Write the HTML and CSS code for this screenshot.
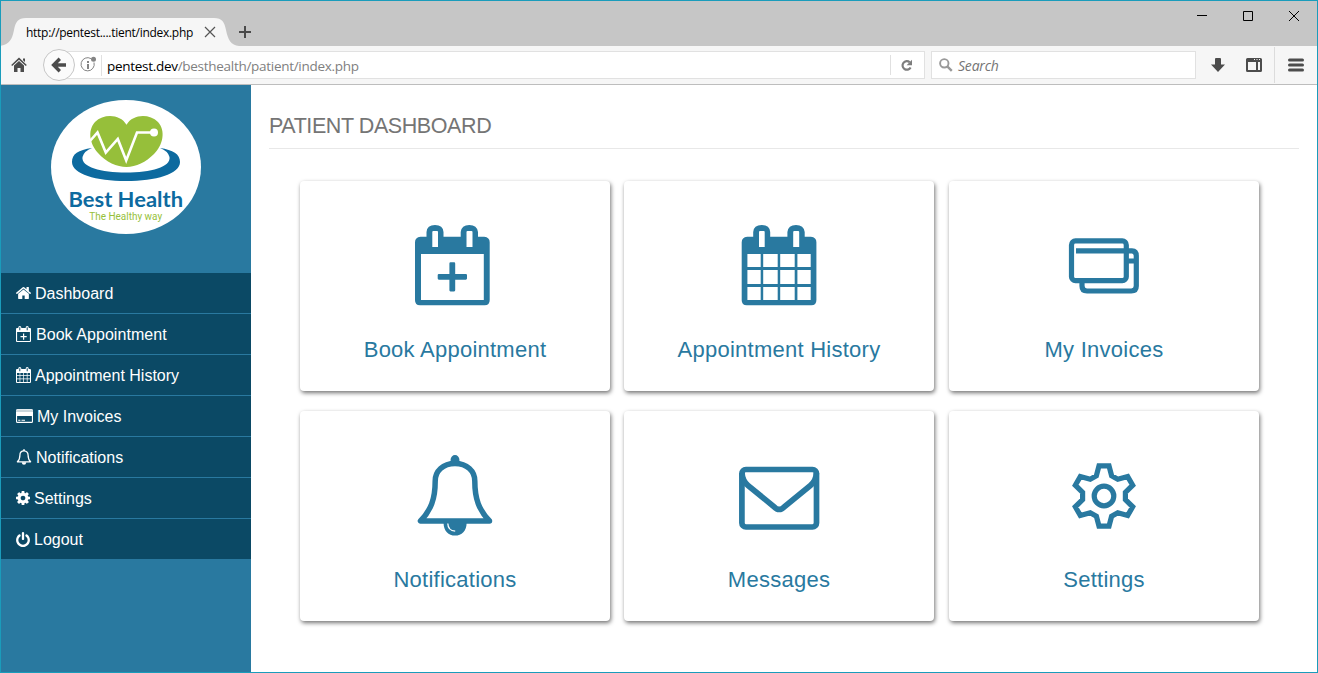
FILE: index.html
```html
<!DOCTYPE html>
<html lang="en">
<head>
<meta charset="utf-8">
<title>Patient Dashboard</title>
<link rel="stylesheet" href="styles.css">
</head>
<body>
<div class="window">
  <header class="titlebar">
    <div class="tab">
      <svg class="tab-shape" width="240" height="28" viewBox="0 0 240 28"><path d="M0 28C10 27 13 22 15 12C16.500 4 19 0 27 0H215C223 0 225.500 4 227 12C229 22 232 27 240 28Z" fill="#f6f6f6"/></svg>
      <span class="tab-title">http://pentest....tient/index.php</span>
      <svg class="tab-close" width="12" height="12" viewBox="0 0 12 12"><path d="M1 1l10 10M11 1L1 11" stroke="#555" stroke-width="1.200"/></svg>
    </div>
    <svg class="tab-new" width="14" height="14" viewBox="0 0 14 14"><path d="M7 1v12M1 7h12" stroke="#4a4a4a" stroke-width="2"/></svg>
    <div class="controls">
      <svg width="12" height="12" viewBox="0 0 12 12"><path d="M1 5.500h10" stroke="#000"/></svg>
      <svg width="12" height="12" viewBox="0 0 12 12"><path d="M1.500 1.500h9v9h-9z" fill="none" stroke="#000"/></svg>
      <svg width="12" height="12" viewBox="0 0 12 12"><path d="M1 1l10 10M11 1L1 11" stroke="#000"/></svg>
    </div>
  </header>

  <div class="toolbar">
    <svg class="home" width="16" height="16" viewBox="0 0 16 16"><path d="M8 .500L15.800 8l-1 1L8 2.700 1.200 9l-1-1zM12 1.500h2V5l-2-1.800zM8 4l5 4.600V15H9.500v-4h-3v4H3V8.600z" fill="#4c4c4c"/></svg>
    <span class="back"><svg width="16" height="16" viewBox="0 0 16 16"><path d="M8.800 1.800L2.600 8l6.200 6.200M3 8h12" fill="none" stroke="#4c4c4c" stroke-width="3.400"/></svg></span>
    <div class="urlbar">
      <svg class="info" width="18" height="18" viewBox="0 0 18 18"><path d="M11 2.600A6.600 6.600 0 1 0 14 6.500" fill="none" stroke="#848484"/><circle cx="13.500" cy="3.300" r="2.500" fill="#848484"/><path d="M7 5h2v2H7zM7 8h2v5H7z" fill="#848484"/></svg>
      <span class="address"><b>pentest.dev</b>/besthealth/patient/index.php</span>
      <span class="reload"><svg width="13" height="13" viewBox="0 0 13 13"><path d="M9.700 3.200A4.300 4.300 0 1 0 10.600 8.500" fill="none" stroke="#7d7d7d" stroke-width="2.200"/><path d="M12 .800v5.400H6.600z" fill="#7d7d7d"/></svg></span>
    </div>
    <div class="search">
      <svg width="14" height="14" viewBox="0 0 14 14"><circle cx="5.300" cy="5.300" r="4.200" fill="none" stroke="#999" stroke-width="1.900"/><path d="M8.300 8.300l4.500 4.500" stroke="#999" stroke-width="2.400"/></svg>
      <span>Search</span>
    </div>
    <svg class="download" width="14" height="16" viewBox="0 0 14 16"><path d="M4 2q0-1 1-1h4q1 0 1 1v5.500h4L7 15 0 7.500h4z" fill="#4c4c4c"/></svg>
    <svg class="panel" width="16" height="14" viewBox="0 0 16 14"><path fill-rule="evenodd" d="M1.500 0h13Q16 0 16 1.500v11q0 1.500-1.500 1.500h-13Q0 14 0 12.500v-11Q0 0 1.500 0zM2 4v8h8V4zM12 4v8h2V4zM8 1v1h1V1zM10.500 1v1h1V1zM13 1v1h1V1z" fill="#4c4c4c"/></svg>
    <span class="menu"><svg width="16" height="14" viewBox="0 0 16 14"><path d="M1.500 2h13M1.500 7h13M1.500 12h13" stroke="#4c4c4c" stroke-width="3" stroke-linecap="round"/></svg></span>
  </div>

  <div class="page">
    <aside class="sidebar">
      <svg class="logo" width="150" height="134" viewBox="0 0 150 134">
        <ellipse cx="75" cy="67" rx="75" ry="67" fill="#fff"/>
        <path fill-rule="evenodd" d="M21 62C21 54 27 50 41 48Q33 51 31.500 57C30 67 50 72.500 75 72.500S120 67 118.500 57Q117 51 109 48C122 50 129 54 129 62C129 74 105 81 75 81S21 74 21 62Z" fill="#0d6a9f"/>
        <path d="M75.500 24.800C82 14 98 13.500 107 22C115 31 112 45 103 54C95 62 85 67 75.500 67S55 62 47 53C39 44 36 31 44 22C53 13.500 69 14 75.500 24.800Z" fill="#96bf3a"/>
        <path d="M39 41L46.500 32.500L54.800 52.500L66.800 39L75.200 60.500L86 32.500H101" fill="none" stroke="#fff" stroke-width="2.600"/>
        <circle cx="103" cy="32.500" r="4" fill="#fff"/>
        <text class="logo-name" x="17.500" y="106.500" textLength="114.500" lengthAdjust="spacingAndGlyphs">Best Health</text>
        <text class="logo-tag" x="38.300" y="120" textLength="72.800" lengthAdjust="spacingAndGlyphs">The Healthy way</text>
      </svg>
      <nav class="nav">
        <a class="item"><svg width="15" height="16" viewBox="90 128 1612 1536"><path fill="#fff" d="M1472 992v480q0 26-19 45t-45 19h-384v-384h-256v384h-384q-26 0-45-19t-19-45v-480q0-1 .5-3t.5-3l575-474 575 474q1 2 1 6zm223-69l-62 74q-8 9-21 11h-3q-13 0-21-7l-692-577-692 577q-12 8-24 7-13-2-21-11l-62-74q-8-10-7-23.500t11-21.500l719-599q32-26 76-26t76 26l244 204v-195q0-14 9-23t23-9h192q14 0 23 9t9 23v408l219 182q10 8 11 21.500t-7 23.500z"/></svg><span>Dashboard</span></a>
        <a class="item"><svg width="15" height="16" viewBox="0 0 15 16"><path fill="#fff" fill-rule="evenodd" d="M1 2h1.200q0-2 1.600-2t1.600 2h4.200q0-2 1.600-2t1.600 2H14q1 0 1 1v12q0 1-1 1H1q-1 0-1-1V3q0-1 1-1zM1.100 6v9h12.800V6zM3.300 1.200v3h1v-3zM10.700 1.200v3h1v-3zM7 7.500h1.200V10h2.500v1.200H8.200v2.500H7v-2.500H4.500V10H7z"/></svg><span class="wide book">Book Appointment</span></a>
        <a class="item"><svg width="15" height="16" viewBox="0 0 15 16"><path fill="#fff" fill-rule="evenodd" d="M1 2h1.200q0-2 1.600-2t1.600 2h4.200q0-2 1.600-2t1.600 2H14q1 0 1 1v12q0 1-1 1H1q-1 0-1-1V3q0-1 1-1zM3.300 1.200v3h1v-3zM10.700 1.200v3h1v-3zM1 6v2.300h2.600V6zM4.300 6v2.300h2.900V6zM7.900 6v2.300h2.900V6zM11.500 6v2.300H14V6zM1 9v2.500h2.600V9zM4.300 9v2.500h2.900V9zM7.900 9v2.500h2.900V9zM11.500 9v2.500H14V9zM1 12.300V15h2.600v-2.700zM4.300 12.300V15h2.900v-2.700zM7.900 12.300V15h2.900v-2.700zM11.500 12.300V15H14v-2.700z"/></svg><span>Appointment History</span></a>
        <a class="item"><svg width="17" height="14" viewBox="0 0 17 14"><path fill="#fff" fill-rule="evenodd" d="M1.500 0h14Q17 0 17 1.500v11q0 1.500-1.500 1.500h-14Q0 14 0 12.500v-11Q0 0 1.500 0zM1.100 1.200v1.600h14.800V1.200zM1.100 7v5.800h14.800V7zM2.200 10.800h2.200v1H2.200zM5.500 10.800H9v1H5.500z"/><path d="M0 1.500Q0 .500 1.500.500h14Q17 .500 17 1.500V3H0z" fill="#c9d6dc"/></svg><span>My Invoices</span></a>
        <a class="item"><svg width="16" height="16" viewBox="0 0 16 16"><path d="M8 1.800C5.300 1.800 3.900 3.900 3.900 6.200C3.900 9.500 3.100 11.300 1.400 12.800H14.600C12.900 11.300 12.100 9.500 12.100 6.200C12.100 3.900 10.700 1.800 8 1.800Z" fill="none" stroke="#fff" stroke-width="1.300" stroke-linejoin="round"/><path d="M7.200.300h1.600v1.800H7.200zM5.700 13.200h4.600Q10 15.800 8 15.800T5.700 13.200z" fill="#fff"/></svg><span>Notifications</span></a>
        <a class="item"><svg width="14" height="14" viewBox="128 128 1536 1536"><path fill="#fff" d="M1152 896q0-106-75-181t-181-75-181 75-75 181 75 181 181 75 181-75 75-181zm512-109v222q0 12-8 23t-20 13l-185 28q-19 54-39 91 35 50 107 138 10 12 10 25t-9 23q-27 37-99 108t-94 71q-12 0-26-9l-138-108q-44 23-91 38-16 136-29 186-7 28-36 28h-222q-14 0-24.500-8.500t-11.500-21.500l-28-184q-49-16-90-37l-141 107q-10 9-25 9-14 0-25-11-126-114-165-168-7-10-7-23 0-12 8-23 15-21 51-66.500t54-70.500q-27-50-41-99l-183-27q-13-2-21-12.500t-8-23.500v-222q0-12 8-23t19-13l186-28q14-46 39-92-40-57-107-138-10-12-10-24 0-10 9-23 26-36 98.500-107.500t94.500-71.500q13 0 26 10l138 107q44-23 91-38 16-136 29-186 7-28 36-28h222q14 0 24.500 8.500t11.500 21.500l28 184q49 16 90 37l142-107q9-9 24-9 13 0 25 10 129 119 165 170 7 8 7 22 0 12-8 23-15 21-51 66.500t-54 70.500q26 50 41 98l183 28q13 2 21 12.500t8 23.500z"/></svg><span>Settings</span></a>
        <a class="item"><svg width="14" height="15" viewBox="128 0 1536 1664"><path fill="#fff" d="M1664 896q0 156-61 298t-164 245-245 164-298 61-298-61-245-164-164-245-61-298q0-182 80.500-343t226.500-270q43-32 95.500-25t83.500 50q32 42 24.500 94.500t-49.500 84.500q-98 74-151.500 181t-53.500 228q0 104 40.500 198.500t109.500 163.500 163.500 109.500 198.500 40.500 198.500-40.500 163.500-109.500 109.500-163.500 40.500-198.500q0-121-53.500-228t-151.500-181q-42-32-49.500-84.500t24.500-94.500q31-43 84-50t95 25q146 109 226.500 270t80.500 343zm-640-768v640q0 52-38 90t-90 38-90-38-38-90v-640q0-52 38-90t90-38 90 38 38 90z"/></svg><span>Logout</span></a>
      </nav>
    </aside>

    <main class="content">
      <h1 class="heading">PATIENT DASHBOARD</h1>
      <section class="cards">
        <a class="card">
          <svg width="90" height="90" viewBox="0 0 90 90"><path fill="#2979a0" fill-rule="evenodd" d="M10.500 16.700H16.500V12Q17 5 25 5T33.500 12V16.700H50.700V12Q51.500 5 59.300 5T68 12V16.700H74.200Q79.700 17.200 79.700 22.200V80Q79.700 85.300 74.700 85.300H10Q5 85.300 5 80.300V22.200Q5 17.200 10.500 16.700ZM11 34V80H73.800V34ZM22.300 12Q22.300 11 23.300 11H27.200Q28 11 28 12V27H22.300ZM56.500 12Q56.500 11 57.500 11H61.500Q62.500 11 62.500 12V27H56.500Z"/><path fill="#2979a0" d="M40.500 42.300h3.600q1.100 0 1.100 1.100V54h10.600q1.200 0 1.200 1.100v3.500q0 1.100-1.200 1.100H45.200v10.600q0 1.100-1.100 1.100h-3.600q-1.100 0-1.100-1.100V59.700H28.900q-1.200 0-1.200-1.100v-3.500q0-1.100 1.200-1.100h10.500V43.400q0-1.100 1.100-1.100z"/></svg>
          <span>Book Appointment</span>
        </a>
        <a class="card">
          <svg width="90" height="90" viewBox="-2.700 0 90 90"><path fill="#2979a0" fill-rule="evenodd" d="M10.500 16.700H16.500V12Q17 5 25 5T33.500 12V16.700H50.700V12Q51.500 5 59.300 5T68 12V16.700H74.200Q79.700 17.200 79.700 22.200V80Q79.700 85.300 74.700 85.300H10Q5 85.300 5 80.300V22.200Q5 17.200 10.500 16.700ZM22.300 12Q22.300 11 23.300 11H27.200Q28 11 28 12V27H22.300ZM56.500 12Q56.500 11 57.500 11H61.500Q62.500 11 62.500 12V27H56.500ZM10.700 34V47H24V34ZM26.500 34V47H41V34ZM43.500 34V47H58V34ZM60.700 34V47H74V34ZM10.700 50V64H24V50ZM26.500 50V64H41V50ZM43.500 50V64H58V50ZM60.700 50V64H74V50ZM10.700 67V80H24V67ZM26.500 67V80H41V67ZM43.500 67V80H58V67ZM60.700 67V80H74V67Z"/></svg>
          <span>Appointment History</span>
        </a>
        <a class="card">
          <svg width="90" height="90" viewBox="0 0 90 90" fill="none" stroke="#2979a0" stroke-width="5.200"><rect x="12.500" y="20.900" width="54.800" height="39.800" rx="4"/><path d="M17 30.900H73Q77.300 30.900 77.300 36V66Q77.300 71 72.300 71H28Q23 71 23 66V62M69 41H78"/></svg>
          <span>My Invoices</span>
        </a>
        <a class="card">
          <svg width="90" height="90" viewBox="0 0 90 90"><path d="M45 13.500C33 13.500 25.200 21 25.200 31C25.200 49 21 60 10.500 71H79.500C69 60 64.800 49 64.800 31C64.800 21 57 13.500 45 13.500Z" fill="none" stroke="#2979a0" stroke-width="5.500" stroke-linejoin="round"/><path d="M40.600 13V9.500A4.400 4.400 0 0 1 49.400 9.500V13zM33.600 72H56.600C57 80.500 52 85.600 45.100 85.600S33.200 80.500 33.600 72Z" fill="#2979a0"/><path d="M37.800 73.500Q38 80.600 45.200 81.200" fill="none" stroke="#fff" stroke-width="1.300"/></svg>
          <span>Notifications</span>
        </a>
        <a class="card">
          <svg width="90" height="90" viewBox="0 0 90 90" fill="none" stroke="#2979a0" stroke-width="5.700"><rect x="7.900" y="19.500" width="74.600" height="57.500" rx="4"/><path d="M8 23Q8.500 31 14 35.500L39 55.800Q45.200 63.200 51.400 55.800L76.400 35.500Q82 31 82.400 23" stroke="none"/><path d="M8 23Q8.500 31 14 35.500L40 56.700Q45.200 62.200 50.400 56.700L76.400 35.500Q82 31 82.400 23" stroke-linejoin="round"/></svg>
          <span>Messages</span>
        </a>
        <a class="card">
          <svg width="90" height="90" viewBox="-45 -46 90 90" fill="none" stroke="#2979a0" stroke-width="5.200"><circle r="9.800"/><path d="M-7.600-20.300L-5-30.200H5L7.600-20.300L13.800-16.700L23.700-19.400L28.700-10.800L21.400-3.600V3.600L28.700 10.800L23.700 19.400L13.800 16.700L7.600 20.300L5 30.200H-5L-7.600 20.300L-13.800 16.700L-23.700 19.400L-28.700 10.800L-21.400 3.600V-3.600L-28.700-10.800L-23.700-19.400L-13.800-16.700Z"/></svg>
          <span>Settings</span>
        </a>
      </section>
    </main>
  </div>
</div>
</body>
</html>
```
FILE: styles.css
```css
* { box-sizing: border-box; }
body {
  margin: 0;
  font-family: "Liberation Sans", Arial, sans-serif;
}
svg { display: block; flex: none; }
.window {
  width: 1318px;
  height: 673px;
  border: 1px solid #1a9cbb;
  display: flex;
  flex-direction: column;
  background: #fff;
  overflow: hidden;
}

/* Browser chrome */
.titlebar {
  flex: none;
  height: 45px;
  background: #c6c6c6;
  display: flex;
  align-items: flex-end;
}
.tab {
  position: relative;
  width: 237px;
  height: 28px;
  display: flex;
  align-items: center;
  padding-left: 25px;
  font: 12px "Open Sans", "Noto Sans", sans-serif;
  color: #000;
}
.tab-shape { position: absolute; left: -2px; top: 0; }
.tab-title {
  position: relative;
  width: 167px;
  letter-spacing: -0.28px;
  white-space: nowrap;
}
.tab-close { position: relative; margin-left: 11px; }
.tab-new { margin-bottom: 7px; }
.controls {
  margin-left: auto;
  align-self: flex-start;
  display: flex;
  gap: 34px;
  padding: 9px 17px 0 0;
}
.toolbar {
  flex: none;
  height: 39px;
  background: #f6f6f6;
  border-bottom: 1px solid #bdbdbd;
  display: flex;
  align-items: center;
  font-family: "Open Sans", "Noto Sans", sans-serif;
  padding-left: 10px;
}
.back {
  position: relative;
  z-index: 1;
  width: 32px;
  height: 32px;
  margin-left: 16px;
  border: 1px solid #c6c6c6;
  border-radius: 50%;
  background: #fbfbfb;
  display: flex;
  align-items: center;
  justify-content: center;
}
.urlbar {
  width: 866px;
  height: 28px;
  margin-left: -16px;
  padding-left: 20px;
  background: #fff;
  border: 1px solid #e1e1e1;
  display: flex;
  align-items: center;
}
.address {
  margin-left: 3px;
  padding-left: 5px;
  border-left: 1px solid #e0e0e0;
  line-height: 20px;
  font-size: 13.5px;
  letter-spacing: -0.29px;
  padding-top: 1px;
  color: #808080;
}
.address b { font-weight: 400; color: #000; }
.reload {
  margin-left: auto;
  width: 34px;
  height: 20px;
  padding-right: 2px;
  border-left: 1px solid #e0e0e0;
  display: flex;
  align-items: center;
  justify-content: center;
}
.search {
  width: 265px;
  height: 28px;
  margin-left: 6px;
  padding-left: 7px;
  background: #fff;
  border: 1px solid #e1e1e1;
  display: flex;
  align-items: center;
  gap: 5px;
  font-size: 14px;
  letter-spacing: -0.2px;
  font-style: italic;
  color: #757575;
}
.search span { padding-top: 1px; }
.download { margin-left: 15px; }
.panel { margin-left: 21px; }
.menu {
  margin-left: 12px;
  padding-left: 13px;
  height: 36px;
  border-left: 1px solid #dcdcdc;
  display: flex;
  align-items: center;
}

/* Application */
.page { flex: 1; display: flex; min-height: 0; }
.sidebar { width: 250px; background: #2979a0; }
.logo { margin: 15px 0 39px 50px; }
.logo-name { font: 700 20px Lato, sans-serif; fill: #0d6a9f; }
.logo-tag { font: 10.5px Roboto, sans-serif; fill: #96bf3a; }
.nav { background: #0b4965; }
.item {
  height: 41px;
  padding-left: 15px;
  border-bottom: 1px solid #2979a0;
  display: flex;
  align-items: center;
  gap: 4px;
  font-size: 16px;
  color: #fff;
}
.item span { padding-top: 2px; }
.item:last-child { border-bottom: 0; height: 40px; }
.item .wide { margin-left: 1px; }
.item .book { letter-spacing: 0.05px; }
.content { flex: 1; padding: 0 18px; }
.heading {
  margin: 0;
  height: 64px;
  padding-top: 28px;
  border-bottom: 1px solid #e8e8e8;
  font-size: 21.5px;
  letter-spacing: -0.42px;
  line-height: 26px;
  font-weight: 400;
  color: #757575;
}
.cards {
  display: grid;
  grid-template-columns: 324px 325px 310px;
  row-gap: 20px;
  margin: 32px 0 0 31px;
}
.card {
  width: 310px;
  height: 210px;
  padding-top: 39px;
  border-radius: 4px;
  background: #fff;
  box-shadow: 1px 2px 4px rgba(0, 0, 0, 0.55);
  display: flex;
  flex-direction: column;
  align-items: center;
  gap: 27px;
  font-size: 22px;
  letter-spacing: 0.25px;
  line-height: 26px;
  color: #2979a0;
}
```
